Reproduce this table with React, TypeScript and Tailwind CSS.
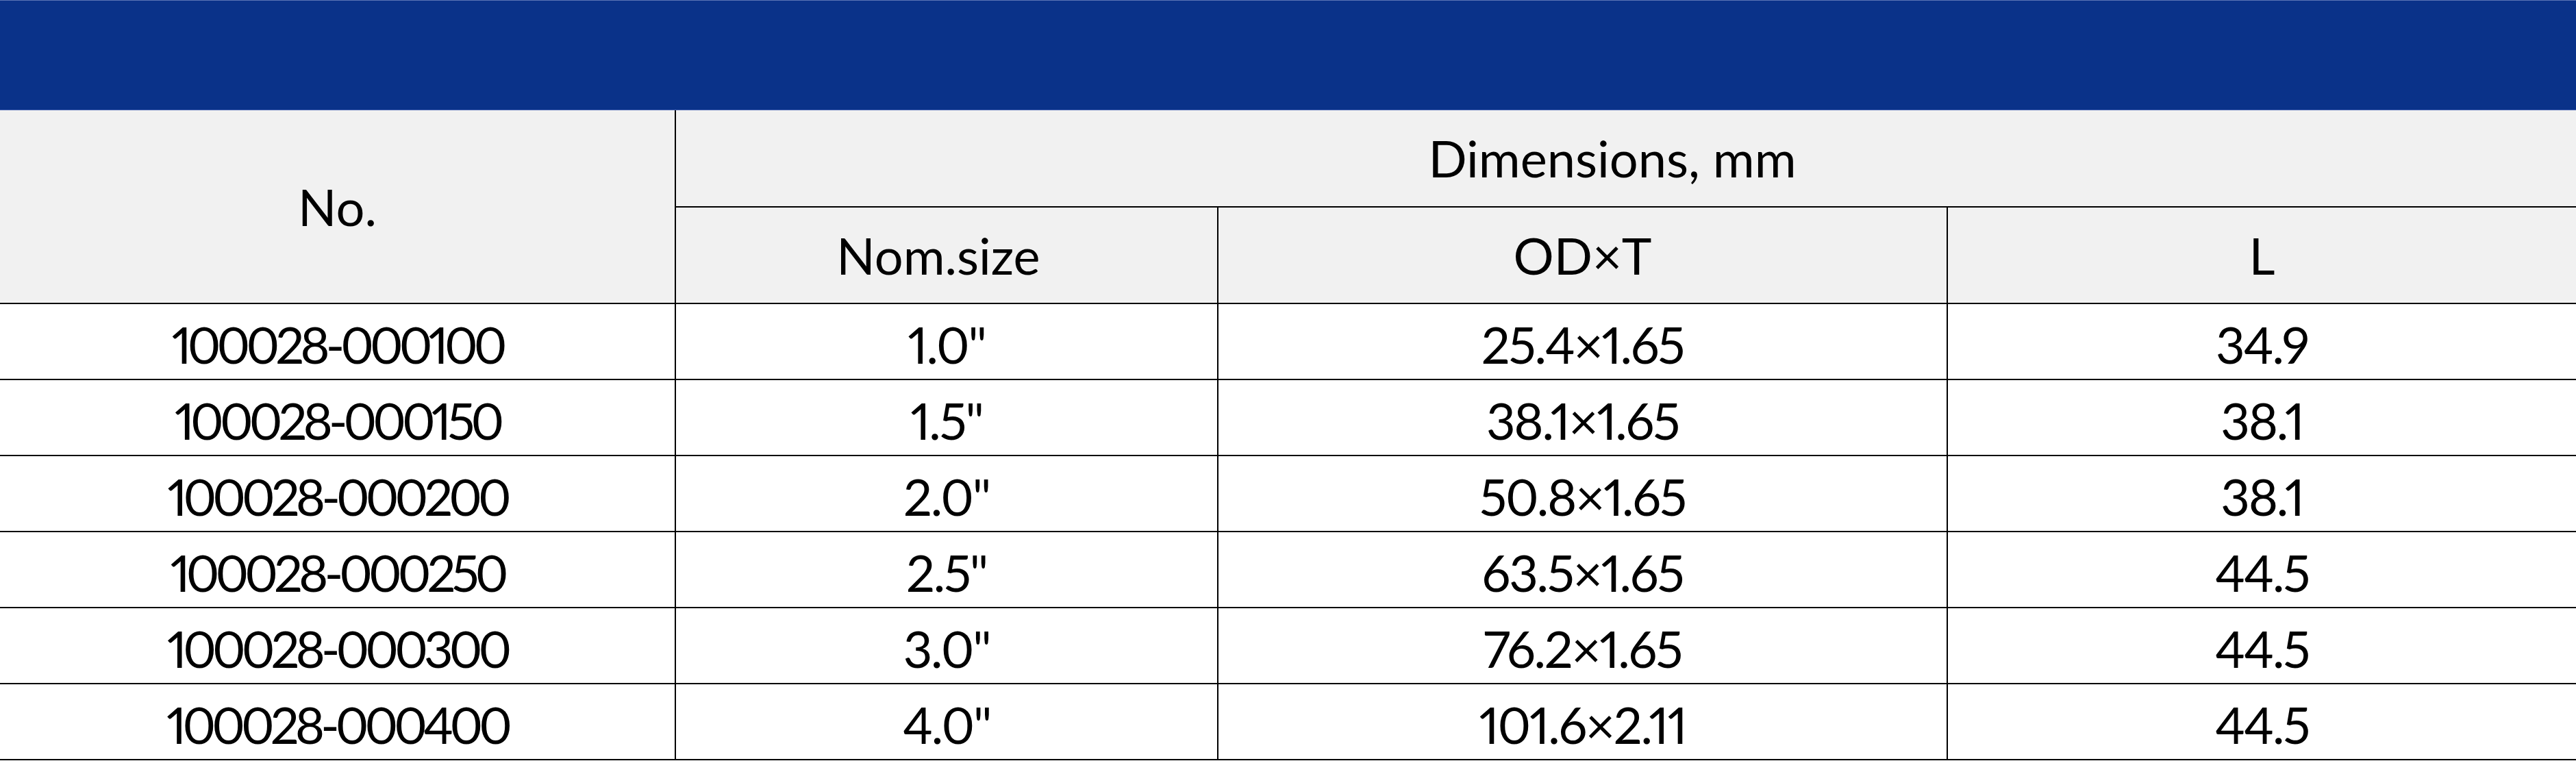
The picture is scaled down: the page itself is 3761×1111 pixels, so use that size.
const rows = [
  { no: '100028-000100', nom: '1.0"', odt: '25.4×1.65', l: '34.9' },
  { no: '100028-000150', nom: '1.5"', odt: '38.1×1.65', l: '38.1' },
  { no: '100028-000200', nom: '2.0"', odt: '50.8×1.65', l: '38.1' },
  { no: '100028-000250', nom: '2.5"', odt: '63.5×1.65', l: '44.5' },
  { no: '100028-000300', nom: '3.0"', odt: '76.2×1.65', l: '44.5' },
  { no: '100028-000400', nom: '4.0"', odt: '101.6×2.11', l: '44.5' },
];

export default function App() {
  return (
    <div className="w-[3761px] bg-white font-['Lato',sans-serif] text-black">
      <div className="h-[161px] border-t border-b border-t-[#5c74b6] border-b-[#4562b0] bg-[#0a3289]" />

      <table className="w-full table-fixed border-collapse text-center text-[74px] leading-none">
        <colgroup>
          <col className="w-[986px]" />
          <col className="w-[792px]" />
          <col className="w-[1065px]" />
          <col className="w-[918px]" />
        </colgroup>
        <thead className="bg-[#f1f1f1]">
          <tr className="h-[141px]">
            <th rowSpan={2} className="border-r-2 border-b-2 border-black font-normal">
              No.
            </th>
            <th colSpan={3} className="border-b-2 border-black pr-10 font-normal">
              Dimensions, mm
            </th>
          </tr>
          <tr className="h-[141px]">
            <th className="border-r-2 border-b-2 border-black pr-6 font-normal">Nom.size</th>
            <th className="border-r-2 border-b-2 border-black font-normal">OD×T</th>
            <th className="border-b-2 border-black font-normal">L</th>
          </tr>
        </thead>
        <tbody className="proportional-nums tracking-[-0.03em]">
          {rows.map((r) => (
            <tr key={r.no} className="h-[111px]">
              <td className="border-r-2 border-b-2 border-black pt-2 tracking-[-0.08em]">{r.no}</td>
              <td className="border-r-2 border-b-2 border-black pt-2">{r.nom}</td>
              <td className="border-r-2 border-b-2 border-black pt-2">{r.odt}</td>
              <td className="border-b-2 border-black pt-2">{r.l}</td>
            </tr>
          ))}
        </tbody>
      </table>
    </div>
  );
}
